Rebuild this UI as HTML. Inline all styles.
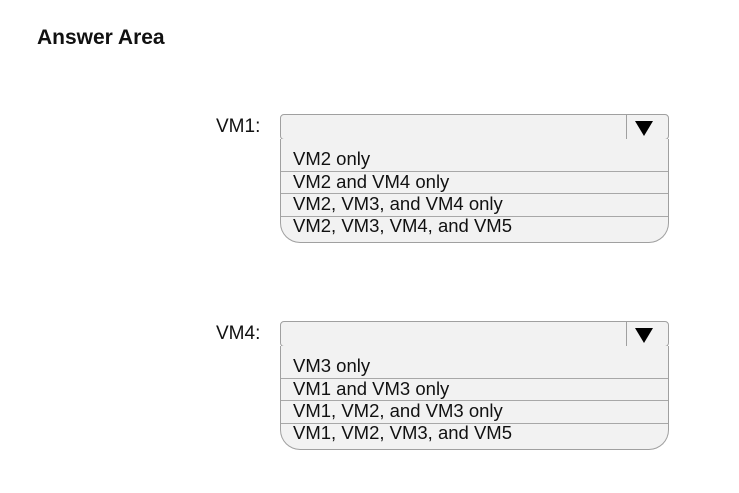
<!DOCTYPE html>
<html><head><style>
body{margin:0;width:739px;height:493px;background:#fff;font-family:"Liberation Sans",sans-serif;position:relative;overflow:hidden}
.t{position:absolute;left:37px;top:26px;font-weight:bold;font-size:21px;color:#111}
.lab{position:absolute;font-size:19px;color:#111}
.sel{position:absolute;left:280px;width:387px;height:24px;border:1px solid #a0a0a0;border-radius:4px;background:#f2f2f2}
.sel .d{position:absolute;left:345px;top:0;width:1px;height:24px;background:#a0a0a0}
.sel .a{position:absolute;left:354px;top:6px;width:0;height:0;border-left:9px solid transparent;border-right:9px solid transparent;border-top:15px solid #000}
.list{position:absolute;left:280px;width:387px;border:1px solid #a0a0a0;border-top:none;border-radius:0 0 20px 20px;background:#f2f2f2}
.row{position:absolute;left:0;width:387px;font-size:18.5px;color:#111;padding-left:12px;box-sizing:border-box;height:22px;line-height:22px;white-space:nowrap}
.ln{position:absolute;left:0;width:387px;height:1px;background:#a8a8a8}
</style></head><body>
<div class="t">Answer Area</div>

<div class="lab" style="left:216px;top:116px">VM1:</div>
<div class="sel" style="top:114px"><div class="d"></div><div class="a"></div></div>
<div class="list" style="top:139px;height:103px">
<div class="row" style="top:9px">VM2 only</div>
<div class="ln" style="top:32px"></div>
<div class="row" style="top:32px">VM2 and VM4 only</div>
<div class="ln" style="top:54px"></div>
<div class="row" style="top:54px">VM2, VM3, and VM4 only</div>
<div class="ln" style="top:77px"></div>
<div class="row" style="top:76px">VM2, VM3, VM4, and VM5</div>
</div>

<div class="lab" style="left:216px;top:323px">VM4:</div>
<div class="sel" style="top:321px"><div class="d"></div><div class="a"></div></div>
<div class="list" style="top:346px;height:103px">
<div class="row" style="top:9px">VM3 only</div>
<div class="ln" style="top:32px"></div>
<div class="row" style="top:32px">VM1 and VM3 only</div>
<div class="ln" style="top:54px"></div>
<div class="row" style="top:54px">VM1, VM2, and VM3 only</div>
<div class="ln" style="top:77px"></div>
<div class="row" style="top:76px">VM1, VM2, VM3, and VM5</div>
</div>
</body></html>
